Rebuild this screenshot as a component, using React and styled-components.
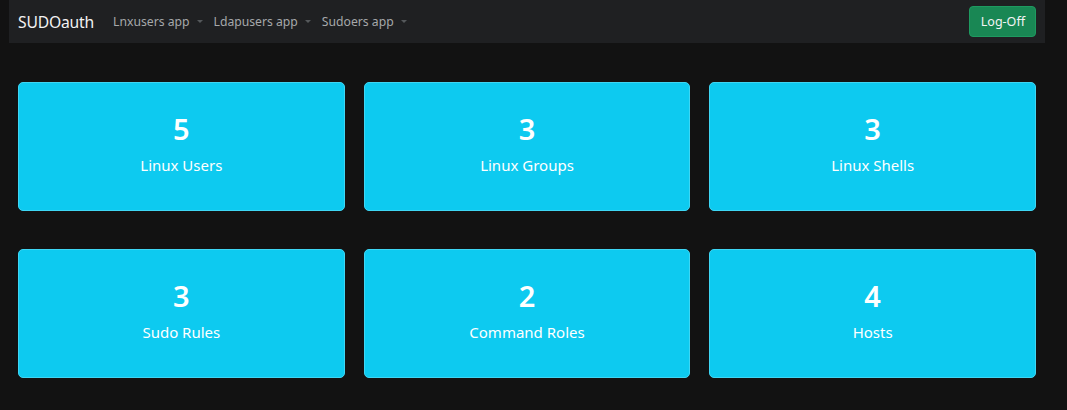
import React from 'react';
import styled, { createGlobalStyle } from 'styled-components';

const GlobalStyle = createGlobalStyle`
  html, body {
    margin: 0;
    padding: 0;
    background-color: #121212;
    font-family: "Noto Sans", "Open Sans", sans-serif;
  }
`

const Page = styled.div`
  width: 1036px;
  margin-left: 9px;
`

const NavBar = styled.nav`
  height: 43px;
  background-color: #1f2022;
  display: flex;
  flex-direction: row;
  align-items: center;
  justify-content: space-between;
  padding: 0 9px;
  box-sizing: border-box;
`

const NavLeft = styled.div`
  display: flex;
  flex-direction: row;
  align-items: center;
`

const Brand = styled.div`
  color: #f2f2f2;
  font-size: 15.7px;
  margin-right: 19px;
  letter-spacing: -0.2px;
`

const NavItem = styled.div`
  color: #a6a8aa;
  font-size: 12.2px;
  display: flex;
  align-items: center;
  margin-right: 11px;
`

const Caret = styled.span`
  display: inline-block;
  margin-left: 7px;
  width: 0;
  height: 0;
  border-left: 3.5px solid transparent;
  border-right: 3.5px solid transparent;
  border-top: 3.5px solid #55585b;
`

const LogOff = styled.button`
  background-color: #198754;
  border: 1px solid #1e9a60;
  border-radius: 4px;
  color: #f4f4f4;
  font-family: inherit;
  font-size: 12.5px;
  height: 31px;
  padding: 0 10px 0 11px;
`

const Grid = styled.div`
  display: grid;
  grid-template-columns: repeat(3, 1fr);
  column-gap: 19px;
  row-gap: 38px;
  padding: 39px 9px 0 9px;
`

const Card = styled.div`
  height: 129px;
  background-color: #0dcaf0;
  border: 1px solid #3ed6f4;
  border-radius: 5px;
  box-sizing: border-box;
  display: flex;
  flex-direction: column;
  align-items: center;
  justify-content: center;
  color: #ffffff;
  padding-bottom: 6px;
`

const Count = styled.div`
  font-size: 29px;
  font-weight: 600;
  line-height: 34px;
  margin-bottom: 9px;
`

const Label = styled.div`
  font-size: 15px;
  line-height: 20px;
`

const stats = [
  { count: 5, label: 'Linux Users' },
  { count: 3, label: 'Linux Groups' },
  { count: 3, label: 'Linux Shells' },
  { count: 3, label: 'Sudo Rules' },
  { count: 2, label: 'Command Roles' },
  { count: 4, label: 'Hosts' },
];

export default function App() {
  return (
    <Page>
      <GlobalStyle />
      <NavBar>
        <NavLeft>
          <Brand>SUDOauth</Brand>
          <NavItem>Lnxusers app<Caret /></NavItem>
          <NavItem>Ldapusers app<Caret /></NavItem>
          <NavItem>Sudoers app<Caret /></NavItem>
        </NavLeft>
        <LogOff>Log-Off</LogOff>
      </NavBar>
      <Grid>
        {stats.map((s) => (
          <Card key={s.label}>
            <Count>{s.count}</Count>
            <Label>{s.label}</Label>
          </Card>
        ))}
      </Grid>
    </Page>
  );
}
